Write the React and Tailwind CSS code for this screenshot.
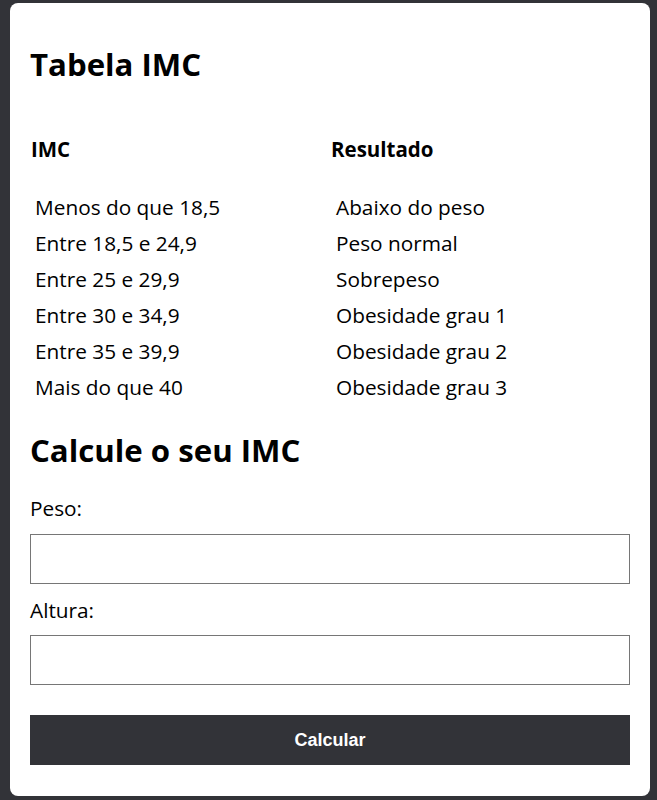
export default function App() {
  const rows = [
    ["Menos do que 18,5", "Abaixo do peso"],
    ["Entre 18,5 e 24,9", "Peso normal"],
    ["Entre 25 e 29,9", "Sobrepeso"],
    ["Entre 30 e 34,9", "Obesidade grau 1"],
    ["Entre 35 e 39,9", "Obesidade grau 2"],
    ["Mais do que 40", "Obesidade grau 3"],
  ];
  return (
    <div className="min-h-[800px] bg-[#323338] pl-[10px] pt-[3px] pb-[5px] text-black" style={{ fontFamily: '"Open Sans", sans-serif' }}>
      <div className="w-[640px] bg-white rounded-[8px] px-[20px] pt-[39px] pb-[31px]">
        <h1 className="text-[31.2px] font-bold leading-[44px]">Tabela IMC</h1>
        <div className="mt-[49px] grid grid-cols-[301px_1fr]">
          <div className="text-[20.5px] font-bold leading-[28px] pl-[1px]">IMC</div>
          <div className="text-[20.5px] font-bold leading-[28px]">Resultado</div>
        </div>
        <div className="mt-[29px] grid grid-cols-[301px_1fr] gap-y-[6px] text-[20.8px] leading-[30px]">
          {rows.map(([a, b]) => [
            <div key={a} className="pl-[5px]">{a}</div>,
            <div key={b} className="pl-[5px]">{b}</div>,
          ])}
        </div>
        <h2 className="mt-[26px] text-[31.2px] font-bold leading-[44px]">Calcule o seu IMC</h2>
        <div className="mt-[21px] text-[20.8px] leading-[30px]">Peso:</div>
        <input className="mt-[11px] block w-full h-[50px] border border-[#767676]" />
        <div className="mt-[11px] text-[20.8px] leading-[30px]">Altura:</div>
        <input className="mt-[10px] block w-full h-[50px] border border-[#767676]" />
        <button className="mt-[30px] block w-full h-[50px] bg-[#323338] text-white font-bold text-[18px]" style={{ fontFamily: '"Liberation Sans", Arial, sans-serif' }}>Calcular</button>
      </div>
    </div>
  );
}
